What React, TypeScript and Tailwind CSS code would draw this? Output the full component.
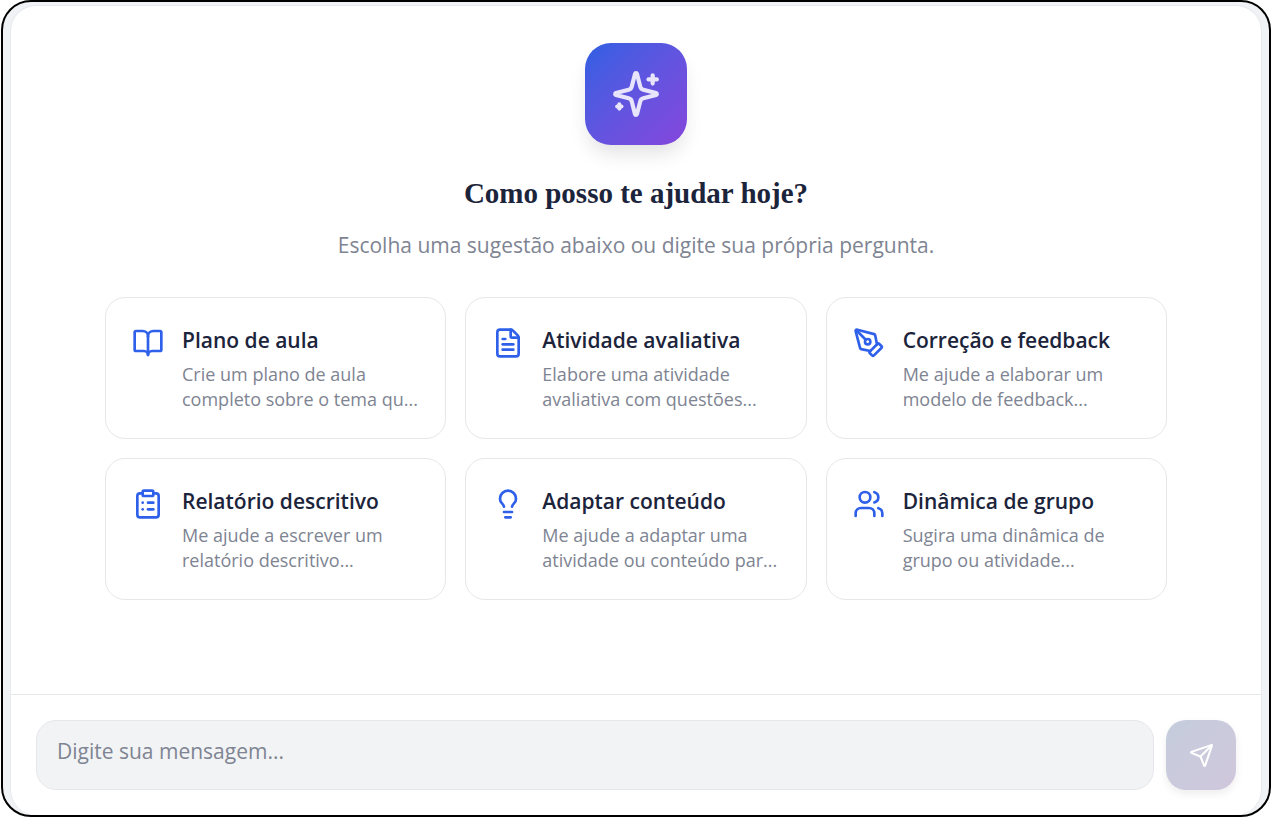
import { useState } from 'react'
import {
  BookOpen,
  ClipboardList,
  FileText,
  Lightbulb,
  PenTool,
  Send,
  Users,
  type LucideIcon,
} from 'lucide-react'

interface Suggestion {
  icon: LucideIcon
  title: string
  lines: [string, string]
}

const suggestions: Suggestion[] = [
  { icon: BookOpen, title: 'Plano de aula', lines: ['Crie um plano de aula', 'completo sobre o tema qu...'] },
  { icon: FileText, title: 'Atividade avaliativa', lines: ['Elabore uma atividade', 'avaliativa com questões...'] },
  { icon: PenTool, title: 'Correção e feedback', lines: ['Me ajude a elaborar um', 'modelo de feedback...'] },
  { icon: ClipboardList, title: 'Relatório descritivo', lines: ['Me ajude a escrever um', 'relatório descritivo...'] },
  { icon: Lightbulb, title: 'Adaptar conteúdo', lines: ['Me ajude a adaptar uma', 'atividade ou conteúdo par...'] },
  { icon: Users, title: 'Dinâmica de grupo', lines: ['Sugira uma dinâmica de', 'grupo ou atividade...'] },
]

const SparklesIcon = () => (
  <svg
    viewBox="0 0 24 24"
    fill="none"
    stroke="currentColor"
    strokeWidth="2"
    strokeLinecap="round"
    strokeLinejoin="round"
    className="size-[50px] text-[#e8e4fb]"
    aria-hidden="true"
  >
    <path d="M9.937 15.5A2 2 0 0 0 8.5 14.063l-6.135-1.582a.5.5 0 0 1 0-.962L8.5 9.936A2 2 0 0 0 9.937 8.5l1.582-6.135a.5.5 0 0 1 .963 0L14.063 8.5A2 2 0 0 0 15.5 9.937l6.135 1.581a.5.5 0 0 1 0 .964L15.5 14.063a2 2 0 0 0-1.437 1.437l-1.582 6.135a.5.5 0 0 1-.963 0z" />
    <path d="M20 3v4" />
    <path d="M22 5h-4" />
    <path d="M4 17v2" />
    <path d="M5 18H3" />
  </svg>
)

const SuggestionCard = ({ icon: Icon, title, lines, onSelect }: Suggestion & { onSelect: () => void }) => (
  <button
    type="button"
    onClick={onSelect}
    className="flex items-start gap-[18px] rounded-[20px] border border-[#e6e7eb] bg-white p-[26px] pt-[26px] pr-5 text-left"
  >
    <Icon className="mt-[3px] size-8 shrink-0 text-[#2f60ea]" />
    <span className="min-w-0">
      <span className="block text-[21px] leading-8 font-semibold whitespace-nowrap text-[#1c243b]">{title}</span>
      <span className="mt-[6px] block text-[18px] leading-[25px] whitespace-nowrap text-[#7e8492]">
        {lines[0]}
        <br />
        {lines[1]}
      </span>
    </span>
  </button>
)

const App = () => {
  const [message, setMessage] = useState('')

  return (
    <div className="h-screen bg-white px-px pb-px font-['Open_Sans','Noto_Sans',sans-serif]">
      <div className="flex h-full flex-col overflow-hidden rounded-[30px] border-2 border-black bg-[#f1f2f5] px-[7px] pt-[3px]">
        <div className="flex flex-1 flex-col rounded-[26px] border border-b-0 border-[#e8e9ed] bg-white">
          <main className="flex flex-1 flex-col items-center px-6 pt-[37px]">
            <div className="flex size-[102px] items-center justify-center rounded-[26px] bg-linear-to-br from-[#2b5fe3] to-[#8445dc] shadow-[0_12px_20px_-4px_rgba(0,0,0,0.12)]">
              <SparklesIcon />
            </div>
            <h1 className="mt-7 font-['Liberation_Serif',serif] text-[29px] leading-10 font-bold text-[#1c243b]">
              Como posso te ajudar hoje?
            </h1>
            <p className="mt-4 text-[21px] leading-8 text-[#7e8492]">
              Escolha uma sugestão abaixo ou digite sua própria pergunta.
            </p>
            <div className="mt-9 grid w-full max-w-[1062px] grid-cols-3 gap-[19px]">
              {suggestions.map((s) => (
                <SuggestionCard key={s.title} {...s} onSelect={() => setMessage(s.title)} />
              ))}
            </div>
          </main>
          <form
            className="flex gap-3 border-t border-[#e6e7eb] p-[25px]"
            onSubmit={(e) => e.preventDefault()}
          >
            <input
              type="text"
              aria-label="Mensagem"
              placeholder="Digite sua mensagem..."
              value={message}
              onChange={(e) => setMessage(e.target.value)}
              className="h-[70px] min-w-0 flex-1 rounded-[20px] border border-[#e6e7eb] bg-[#f2f3f5] px-5 pb-2 text-[21px] text-[#1c243b] placeholder:text-[#7e8492]"
            />
            <button
              type="submit"
              aria-label="Enviar"
              className="flex size-[70px] items-center justify-center rounded-[20px] bg-linear-to-br from-[#c5cddd] to-[#d0c7dc] text-white shadow-[0_4px_8px_rgba(0,0,0,0.07)]"
            >
              <Send className="size-[25px]" />
            </button>
          </form>
        </div>
      </div>
    </div>
  )
}

export default App
